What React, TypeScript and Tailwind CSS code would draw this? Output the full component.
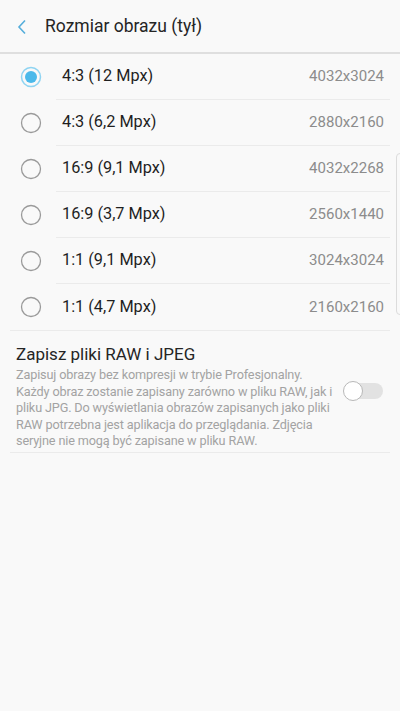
import React from 'react';

interface SizeOption {
  label: string;
  resolution: string;
}

const options: SizeOption[] = [
  { label: '4:3 (12 Mpx)', resolution: '4032x3024' },
  { label: '4:3 (6,2 Mpx)', resolution: '2880x2160' },
  { label: '16:9 (9,1 Mpx)', resolution: '4032x2268' },
  { label: '16:9 (3,7 Mpx)', resolution: '2560x1440' },
  { label: '1:1 (9,1 Mpx)', resolution: '3024x3024' },
  { label: '1:1 (4,7 Mpx)', resolution: '2160x2160' },
];

const Radio: React.FC<{ checked: boolean }> = ({ checked }) => (
  <svg width="22" height="22" viewBox="0 0 22 22" className="shrink-0">
    {checked ? (
      <>
        <circle cx="11" cy="11" r="9.5" fill="none" stroke="#8fd4f2" strokeWidth="1.5" />
        <circle cx="11" cy="11" r="6" fill="#4bb9ea" />
      </>
    ) : (
      <circle cx="11" cy="11" r="9.5" fill="none" stroke="#9a9a9a" strokeWidth="1.3" />
    )}
  </svg>
);

const Toggle: React.FC = () => (
  <div className="relative w-[40px] h-[20px] shrink-0">
    <div className="absolute left-[4px] right-0 top-[2px] h-[16px] rounded-full bg-[#e2e2e2]" />
    <div className="absolute left-0 top-0 w-[20px] h-[20px] rounded-full bg-white border border-[#b8b8b8]" />
  </div>
);

export default function App() {
  const [selected, setSelected] = React.useState(0);

  return (
    <div
      className="relative w-[400px] h-[711px] bg-[#f9f9f9] overflow-hidden"
      style={{ fontFamily: 'Roboto, "Noto Sans", sans-serif' }}
    >
      {/* header */}
      <div className="h-[54px] flex items-center border-b-2 border-[#dfdfdf]">
        <svg width="12" height="16" viewBox="0 0 12 16" className="ml-[16px] mt-[2px]">
          <path d="M9 1.5 L3 8 L9 14.5" fill="none" stroke="#56aedb" strokeWidth="1.6" />
        </svg>
        <span className="ml-[17px] text-[17.5px] text-[#252525] mt-[1px]">Rozmiar obrazu (tył)</span>
      </div>

      {/* options */}
      <div>
        {options.map((opt, i) => (
          <div
            key={opt.label}
            onClick={() => setSelected(i)}
            className="flex items-center h-[46px] pl-[20px] pr-[16px]"
          >
            <Radio checked={selected === i} />
            <div
              className={
                'flex-1 flex items-center justify-between h-full ml-[14px] mr-[-6px] pl-[6px] pr-[6px] ' +
                (i < options.length - 1 ? 'border-b border-[#ebebeb]' : '')
              }
            >
              <span className="text-[16.3px] text-[#1f1f1f]">{opt.label}</span>
              <span className="text-[15px] text-[#8c8c8c]">{opt.resolution}</span>
            </div>
          </div>
        ))}
      </div>

      {/* RAW */}
      <div className="mx-[10px] border-t border-[#ebebeb]">
        <div className="relative pl-[6px] pt-[12px] pb-[2px] border-b border-[#ebebeb]">
          <div className="text-[17px] text-[#252525] leading-[22px]">Zapisz pliki RAW i JPEG</div>
          <p className="text-[12.7px] tracking-[-0.15px] leading-[16.5px] text-[#a3a3a3] mt-[2px] whitespace-nowrap">
            Zapisuj obrazy bez kompresji w trybie Profesjonalny.
            <br />
            Każdy obraz zostanie zapisany zarówno w pliku RAW, jak i
            <br />
            pliku JPG. Do wyświetlania obrazów zapisanych jako pliki
            <br />
            RAW potrzebna jest aplikacja do przeglądania. Zdjęcia
            <br />
            seryjne nie mogą być zapisane w pliku RAW.
          </p>
          <div className="absolute left-[333px] top-[50px]">
            <Toggle />
          </div>
        </div>
      </div>

      {/* scroll indicator */}
      <div className="absolute right-[-4px] top-[153px] w-[8px] h-[162px] rounded-[4px] border border-[#dcdcdc]" />
    </div>
  );
}
